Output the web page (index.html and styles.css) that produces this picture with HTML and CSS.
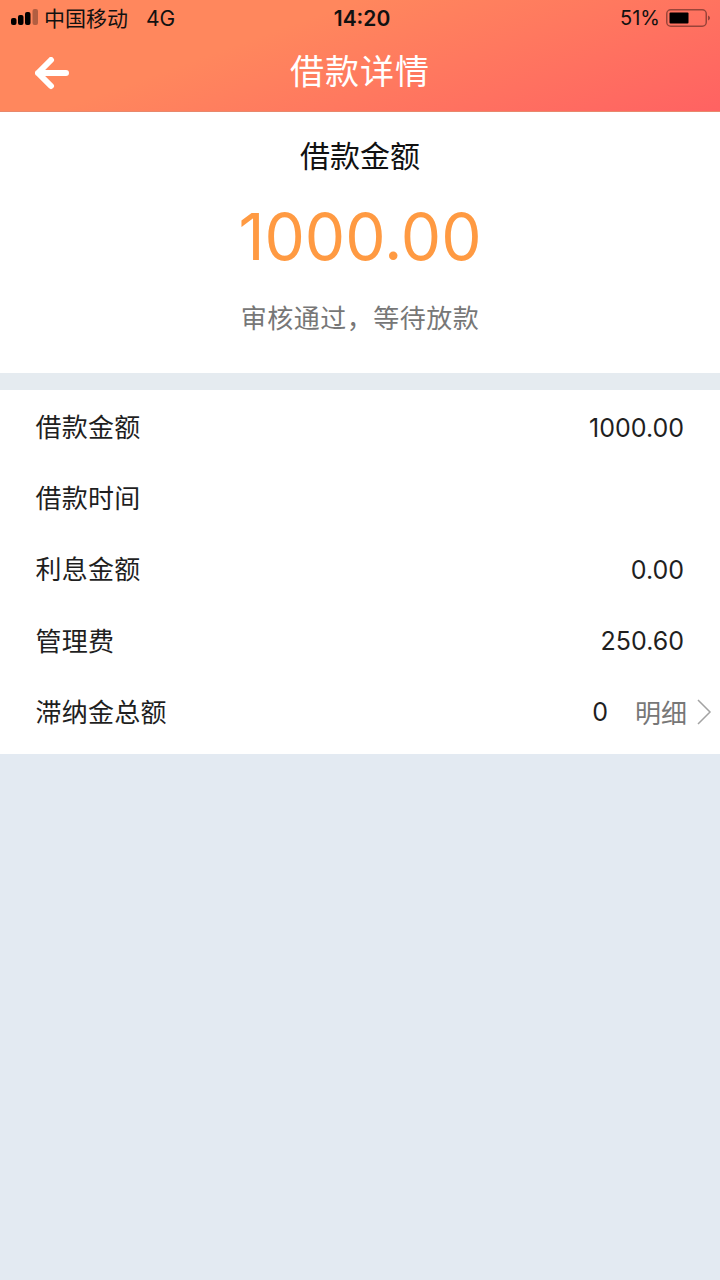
FILE: index.html
```html
<!DOCTYPE html>
<html lang="zh-CN">

<head>
    <meta charset="UTF-8">
    <meta name="viewport" content="width=device-width, initial-scale=1.0">
    <title>借款详情</title>
    <link rel="stylesheet" href="styles.css">
</head>

<body>
    <header class="top-bar">
        <div class="status-bar">
            <div class="status-left">
                <svg class="signal" width="28" height="16" viewBox="0 0 28 16">
                    <rect x="1" y="9" width="5.500" height="7" rx="2" fill="#000"></rect>
                    <rect x="8" y="6" width="5.500" height="10" rx="2" fill="#000"></rect>
                    <rect x="15" y="3" width="5.500" height="13" rx="2" fill="#000"></rect>
                    <rect x="22.500" y="0" width="5.500" height="16" rx="2" fill="#000" opacity="0.3"></rect>
                </svg>
                <span class="carrier">中国移动</span>
                <span class="network">4G</span>
            </div>
            <div class="status-time">14:20</div>
            <div class="status-right">
                <span class="battery-text">51%</span>
                <svg class="battery" width="44" height="18" viewBox="0 0 44 18">
                    <rect x="0.750" y="0.750" width="39.500" height="16.500" rx="4" fill="none" stroke="#000" stroke-opacity="0.4" stroke-width="1.500"></rect>
                    <rect x="3.500" y="3.500" width="19" height="11" rx="1" fill="#000"></rect>
                    <path d="M42 6.500c1.200 0.400 2 1.400 2 2.500s-0.800 2.100-2 2.500z" fill="#000" fill-opacity="0.4"></path>
                </svg>
            </div>
        </div>
        <div class="nav-bar">
            <svg class="back-icon" width="34" height="34" viewBox="0 0 34 34">
                <path d="M16 3L3 16L16 29M3 16H31" fill="none" stroke="#fff" stroke-width="6" stroke-linecap="round" stroke-linejoin="round"></path>
            </svg>
            <h1 class="nav-title">借款详情</h1>
        </div>
    </header>

    <section class="summary">
        <div class="summary-label">借款金额</div>
        <div class="summary-amount">1000.00</div>
        <div class="summary-status">审核通过，等待放款</div>
    </section>

    <section class="detail-list">
        <div class="detail-row">
            <span class="detail-name">借款金额</span>
            <span class="detail-value">1000.00</span>
        </div>
        <div class="detail-row">
            <span class="detail-name">借款时间</span>
        </div>
        <div class="detail-row">
            <span class="detail-name">利息金额</span>
            <span class="detail-value">0.00</span>
        </div>
        <div class="detail-row">
            <span class="detail-name">管理费</span>
            <span class="detail-value">250.60</span>
        </div>
        <div class="detail-row detail-row-link">
            <span class="detail-name">滞纳金总额</span>
            <span class="detail-value late-value">0</span>
            <span class="detail-link">明细</span>
            <svg class="chevron" width="16" height="26" viewBox="0 0 16 26">
                <path d="M2 1L14 13L2 25" fill="none" stroke="#a3a3a3" stroke-width="1.500"></path>
            </svg>
        </div>
    </section>
</body>

</html>
```

FILE: styles.css
```css
* {
    box-sizing: border-box;
}

html,
body {
    height: 100%;
}

body {
    margin: 0;
    background: #e3eaf2;
    color: #1f1f1f;
    font-family: Inter, "Noto Sans CJK SC", sans-serif;
}

.top-bar {
    height: 112px;
    border-bottom: 1px solid #e8886c;
    background: linear-gradient(160deg, #ff875d 35%, #ff6262 100%);
}

.status-bar {
    display: grid;
    grid-template-columns: 1fr auto 1fr;
    align-items: center;
    height: 36px;
    padding: 0 10px;
    color: #111;
    font-size: 21px;
}

.status-left {
    display: flex;
    align-items: center;
}

.signal {
    margin: 0 6px 2px 0;
}

.carrier {
    padding-bottom: 2px;
}

.network {
    margin-left: 18px;
}

.status-time {
    margin-left: 4px;
    font-weight: 600;
}

.status-right {
    display: flex;
    align-items: center;
    justify-content: flex-end;
    gap: 6px;
}

.battery-text {
    font-size: 20px;
}

.nav-bar {
    position: relative;
    display: flex;
    align-items: center;
    justify-content: center;
    height: 70px;
    padding-bottom: 4px;
}

.back-icon {
    position: absolute;
    left: 35px;
    top: 21px;
}

.nav-title {
    margin: 0;
    color: #fff;
    font-size: 34px;
    font-weight: 400;
    letter-spacing: 1px;
}

.summary {
    display: flex;
    flex-direction: column;
    align-items: center;
    height: 278px;
    padding-top: 22px;
    border-bottom: 17px solid #e5ebf0;
    background: #fff;
}

.summary-label {
    color: #111;
    font-size: 30px;
    line-height: 44px;
}

.summary-amount {
    margin-top: 20px;
    color: #ff9a42;
    font-size: 64px;
    line-height: 78px;
}

.summary-status {
    margin-top: 21px;
    color: #777;
    font-size: 26px;
    letter-spacing: 0.5px;
    line-height: 44px;
}

.detail-list {
    padding: 2px 36px 6px;
    background: #fff;
}

.detail-row {
    display: flex;
    align-items: center;
    height: 71.2px;
    font-size: 26px;
}

.detail-name {
    margin-left: -0.5px;
    padding-bottom: 4px;
    letter-spacing: 0.25px;
}

.detail-value {
    margin-left: auto;
    font-size: 25px;
}

.detail-row-link {
    margin-right: -28px;
}

.late-value {
    margin-right: 27px;
}

.detail-link {
    padding-bottom: 2px;
    color: #777;
}

.chevron {
    margin-left: 9px;
}
```
